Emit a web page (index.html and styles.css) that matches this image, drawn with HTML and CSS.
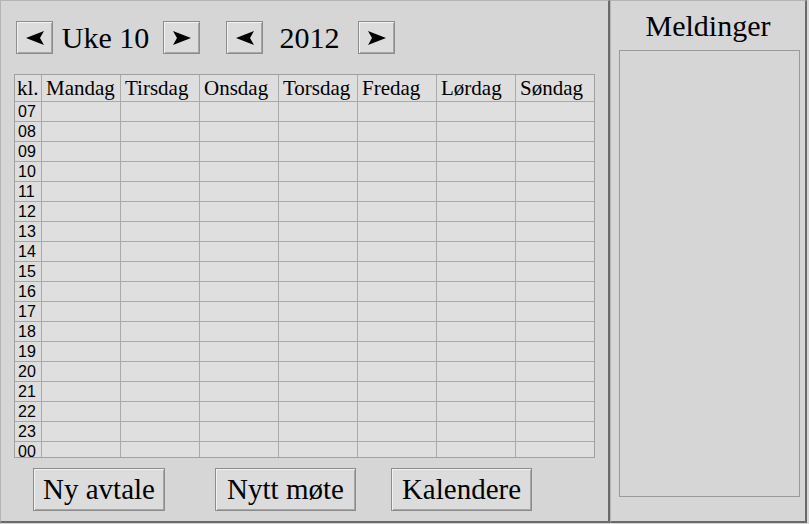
FILE: index.html
```html
<!DOCTYPE html>
<html lang="no">
<head>
<meta charset="utf-8">
<title>Kalender</title>
<link rel="stylesheet" href="styles.css">
</head>
<body>
<div class="app">
  <section class="main-panel">
    <div class="nav">
      <button class="nav-btn" aria-label="Forrige uke"><svg width="18" height="14" viewBox="0 0 18 14"><path d="M0 7 L18 0 L14 7 L18 14 Z" fill="#000"/></svg></button>
      <span class="nav-label week">Uke 10</span>
      <button class="nav-btn" aria-label="Neste uke"><svg width="18" height="14" viewBox="0 0 18 14"><path d="M18 7 L0 0 L4 7 L0 14 Z" fill="#000"/></svg></button>
      <button class="nav-btn group-start" aria-label="Forrige år"><svg width="18" height="14" viewBox="0 0 18 14"><path d="M0 7 L18 0 L14 7 L18 14 Z" fill="#000"/></svg></button>
      <span class="nav-label year">2012</span>
      <button class="nav-btn" aria-label="Neste år"><svg width="18" height="14" viewBox="0 0 18 14"><path d="M18 7 L0 0 L4 7 L0 14 Z" fill="#000"/></svg></button>
    </div>
    <div class="pane">
      <div class="grid">
        <div class="head first">kl.</div>
        <div class="head">Mandag</div>
        <div class="head">Tirsdag</div>
        <div class="head">Onsdag</div>
        <div class="head">Torsdag</div>
        <div class="head">Fredag</div>
        <div class="head">Lørdag</div>
        <div class="head">Søndag</div>
      </div>
    </div>
    <div class="actions">
      <button class="big-btn btn-new">Ny avtale</button>
      <button class="big-btn btn-meeting">Nytt møte</button>
      <button class="big-btn btn-cal">Kalendere</button>
    </div>
  </section>
  <aside class="side-panel">
    <h2 class="side-title">Meldinger</h2>
    <div class="messages"></div>
  </aside>
</div>
<script>
  (function () {
    var grid = document.querySelector('.grid');
    var hours = ['07','08','09','10','11','12','13','14','15','16','17','18','19','20','21','22','23','00'];
    hours.forEach(function (h) {
      var c = document.createElement('div');
      c.className = 'hour';
      c.textContent = h;
      grid.appendChild(c);
      for (var i = 0; i < 7; i++) {
        var d = document.createElement('div');
        d.className = 'cell';
        grid.appendChild(d);
      }
    });
  })();
</script>
</body>
</html>
```

FILE: styles.css
```css
* { box-sizing: border-box; }
html, body { margin: 0; padding: 0; }
body {
  background: #d6d6d6;
  font-family: "Liberation Serif", serif;
  color: #000;
  width: 809px;
  height: 524px;
  overflow: hidden;
}
.app {
  display: flex;
  align-items: flex-start;
}
.main-panel {
  width: 610px;
  height: 523px;
  border-top: 1px solid #b4b4b4;
  border-left: 1px solid #b4b4b4;
  border-right: 2px solid #6a6a6a;
  border-bottom: 2px solid #6a6a6a;
  padding: 20px 0 0 13px;
  display: flex;
  flex-direction: column;
}
.nav {
  display: flex;
  align-items: center;
  margin-left: 2px;
  height: 33px;
}
.nav-btn {
  width: 37px;
  height: 33px;
  padding: 0;
  margin: 0;
  background: #dcdcdc;
  border: 1px solid #8c8c8c;
  box-shadow: inset 1px 1px 0 #f2f2f2, inset -1px -1px 0 #a6a6a6;
  display: flex;
  align-items: center;
  justify-content: center;
}
.nav-btn svg { display: block; }
.group-start { margin-left: 26px; }
.nav-label {
  font-size: 30px;
  line-height: 33px;
  text-align: center;
  white-space: nowrap;
}
.nav-label.week { width: 110px; padding-right: 5px; }
.nav-label.year { width: 95px; padding-right: 2px; }
.pane {
  margin-top: 20px;
  width: 581px;
  height: 384px;
  border: 1px solid #a0a0a0;
  overflow: hidden;
  background: #a9a9a9;
}
.grid {
  display: grid;
  grid-template-columns: 26px repeat(7, 78px);
  grid-auto-rows: 19px;
  grid-template-rows: 26px;
  column-gap: 1px;
  row-gap: 1px;
  background: #aaaaaa;
}
.head {
  background: #dedede;
  font-size: 21px;
  line-height: 26px;
  padding-left: 4px;
  white-space: nowrap;
  overflow: hidden;
}
.head.first { padding-left: 2px; }
.hour {
  background: #dedede;
  font-family: "Liberation Sans", sans-serif;
  font-size: 16px;
  line-height: 19px;
  padding-left: 3px;
}
.cell { background: #dfdfdf; }
.actions {
  display: flex;
  margin-top: 10px;
  padding-left: 19px;
}
.big-btn {
  height: 43px;
  padding: 0;
  margin: 0;
  font-family: "Liberation Serif", serif;
  font-size: 29px;
  line-height: 41px;
  text-align: center;
  color: #000;
  background: #dcdcdc;
  border: 1px solid #8c8c8c;
  box-shadow: inset 1px 1px 0 #f2f2f2, inset -1px -1px 0 #a6a6a6;
  white-space: nowrap;
}
.btn-new { width: 132px; }
.btn-meeting { width: 141px; margin-left: 50px; }
.btn-cal { width: 141px; margin-left: 35px; }
.side-panel {
  width: 197px;
  height: 523px;
  border-top: 1px solid #b4b4b4;
  border-left: 1px solid #b4b4b4;
  border-right: 2px solid #6a6a6a;
  border-bottom: 2px solid #6a6a6a;
  padding: 8px 5px 0 8px;
  display: flex;
  flex-direction: column;
}
.side-title {
  margin: 0;
  font-weight: normal;
  font-size: 30px;
  line-height: 34px;
  text-align: center;
  padding-right: 3px;
  height: 41px;
}
.messages {
  width: 181px;
  height: 447px;
  border: 1px solid #9a9a9a;
  background: #d6d6d6;
}
```
